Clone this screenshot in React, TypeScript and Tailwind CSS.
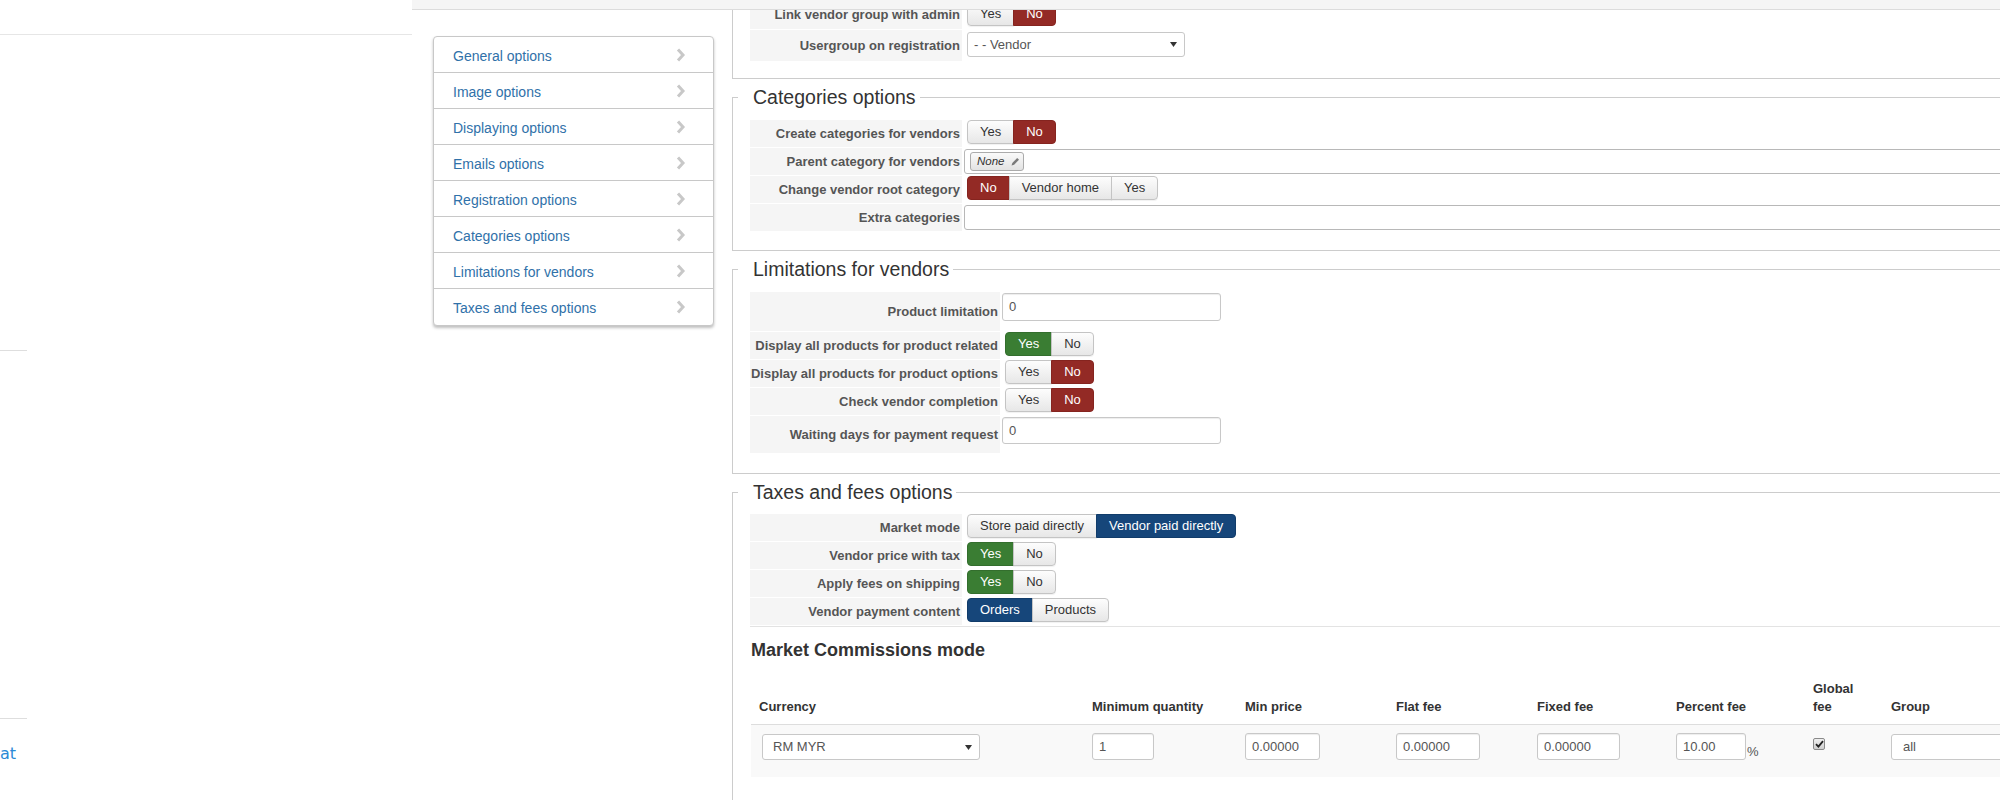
import React from 'react';
import clsx from 'clsx';

// ============================================
// Vendor config page - scrolled view of the options form
// ============================================

type Tone = 'red' | 'green' | 'blue';

const ACTIVE: Record<Tone, string> = {
  red: 'bg-[#932a25] border-[#85241f] text-white',
  green: 'bg-[#3a7d33] border-[#336e2d] text-white',
  blue: 'bg-[#16467a] border-[#113c6a] text-white',
};

const MENU = [
  'General options',
  'Image options',
  'Displaying options',
  'Emails options',
  'Registration options',
  'Categories options',
  'Limitations for vendors',
  'Taxes and fees options',
];

function Chevron() {
  return (
    <svg width="11" height="14" viewBox="0 0 11 14" className="shrink-0">
      <path d="M3 1.5 L8 7 L3 12.5" fill="none" stroke="#c8c8c8" strokeWidth="3" />
    </svg>
  );
}

function Pencil() {
  return (
    <svg width="9" height="9" viewBox="0 0 9 9">
      <path d="M0.5 8.5 L1.3 5.9 L6.2 1 L8 2.8 L3.1 7.7 Z" fill="#7a7a7a" />
    </svg>
  );
}

function Arrow() {
  return (
    <svg width="7" height="5" viewBox="0 0 7 5" className="shrink-0">
      <path d="M0 0 H7 L3.5 5 Z" fill="#333" />
    </svg>
  );
}

function BtnGroup({ items, active, tone, className = '' }: { items: string[]; active: number; tone: Tone; className?: string }) {
  return (
    <div className={`flex ${className}`}>
      {items.map((label, i) => {
        const first = i === 0;
        const last = i === items.length - 1;
        return (
          <span
            key={label}
            className={clsx(
              'h-[24px] px-[12px] border leading-[22px] text-[13px] whitespace-nowrap',
              first && 'rounded-l-[4px]',
              last && 'rounded-r-[4px]',
              !first && '-ml-px',
              i === active
                ? ACTIVE[tone]
                : 'bg-linear-to-b from-[#fdfdfd] to-[#e7e7e7] border-[#c4c4c4] text-[#333] shadow-[0_1px_1px_rgba(0,0,0,0.06)]'
            )}
          >
            {label}
          </span>
        );
      })}
    </div>
  );
}

function Row({ label, w, h, children }: { label: string; w: string; h: string; children?: React.ReactNode }) {
  return (
    <div className={`flex mb-px ${h}`}>
      <div className={`${w} shrink-0 bg-[#f5f5f5] flex items-center justify-end pr-[2px] text-[13px] font-bold text-[#555] whitespace-nowrap`}>
        {label}
      </div>
      <div className="flex-1 min-w-0 pl-px flex items-start">{children}</div>
    </div>
  );
}

function TextBox({ value, className = '' }: { value: string; className?: string }) {
  return (
    <div className={`border border-[#c8c8c8] rounded-[3px] bg-white shadow-[inset_0_1px_1px_rgba(0,0,0,0.075)] flex items-center px-[6px] text-[13px] text-[#555] ${className}`}>
      {value}
    </div>
  );
}

function SelectBox({ text, className = '' }: { text: string; className?: string }) {
  return (
    <div className={`border border-[#c8c8c8] rounded-[3px] bg-white flex items-center justify-between pr-[7px] text-[13px] text-[#555] whitespace-nowrap ${className}`}>
      <span>{text}</span>
      <Arrow />
    </div>
  );
}

function Fieldset({ legend, inner, children }: { legend: string; inner: string; children: React.ReactNode }) {
  return (
    <fieldset className="mt-[6px] border border-[#ccc] min-w-0">
      <legend className="ml-[5px] pl-[15px] pr-[4px] text-[19.5px] leading-[24px] text-[#333]">{legend}</legend>
      <div className={`pl-[17px] ${inner}`}>{children}</div>
    </fieldset>
  );
}

const COLS = 'grid grid-cols-[333px_153px_151px_141px_139px_137px_78px_320px]';
const th = 'px-[8px] pt-[8px] pb-[8px] flex items-end text-[13px] font-bold text-[#333] leading-[18px]';
const td = 'px-[8px] pt-[8px] pb-[17px] flex items-start';

export default function App() {
  return (
    <div className="w-[2000px] h-[800px] overflow-hidden flex bg-white font-['Liberation_Sans',Arial,sans-serif]">
      {/* left panel */}
      <div className="w-[412px] shrink-0 flex flex-col">
        <div className="h-[35px] shrink-0 border-b border-[#e6e6e6]" />
        <div className="mt-[315px] h-px w-[27px] bg-[#dedede]" />
        <div className="mt-[367px] h-px w-[27px] bg-[#dedede]" />
        <div className="mt-[27px] text-[16px] leading-[16px] text-[#2a8ad6] font-['DejaVu_Sans',sans-serif]">at</div>
      </div>

      {/* right panel */}
      <div className="relative flex-1 min-w-0 flex overflow-hidden">
        {/* toolbar strip */}
        <div className="absolute top-0 left-0 right-0 h-[10px] bg-[#f5f5f5] border-b border-[#dcdcdc] z-10" />

        {/* side menu */}
        <div className="ml-[21px] mt-[36px] w-[281px] shrink-0 self-start border border-[#c8c8c8] rounded-[4px] bg-white shadow-[0_2px_3px_rgba(0,0,0,0.25)]">
          {MENU.map((item, i) => (
            <div
              key={item}
              className={clsx(
                'h-[36px] flex items-center justify-between pl-[19px] pr-[27px] text-[14px] text-[#3071a9]',
                i < MENU.length - 1 && 'border-b border-[#c8c8c8]'
              )}
            >
              <span className="pt-[3px]">{item}</span>
              <Chevron />
            </div>
          ))}
        </div>

        {/* form */}
        <div className="ml-[18px] w-[1400px] shrink-0">
          {/* registration (scrolled, top cut) */}
          <div className="border-x border-b border-[#ccc] pl-[17px] pt-px pb-[16px]">
            <Row label="Link vendor group with admin" w="w-[212px]" h="h-[28px]">
              <BtnGroup items={['Yes', 'No']} active={1} tone="red" className="ml-[4px] mt-px" />
            </Row>
            <Row label="Usergroup on registration" w="w-[212px]" h="h-[31px]">
              <SelectBox text="- - Vendor" className="ml-[4px] mt-[2px] h-[25px] w-[218px] pl-[6px]" />
            </Row>
          </div>

          {/* categories */}
          <Fieldset legend="Categories options" inner="pt-[11px] pb-[18px]">
            <Row label="Create categories for vendors" w="w-[212px]" h="h-[27px]">
              <BtnGroup items={['Yes', 'No']} active={1} tone="red" className="ml-[4px]" />
            </Row>
            <Row label="Parent category for vendors" w="w-[212px]" h="h-[27px]">
              <div className="ml-[1px] mt-[1px] h-[25px] w-[1200px] border border-[#b8b8b8] rounded-[3px] bg-white flex items-center pl-[5px]">
                <span className="h-[19px] pl-[6px] pr-[3px] rounded-[3px] border border-[#ababab] bg-linear-to-b from-[#fafafa] to-[#e3e3e3] flex items-center gap-[6px] text-[11.5px] italic text-[#333]">
                  None
                  <Pencil />
                </span>
              </div>
            </Row>
            <Row label="Change vendor root category" w="w-[212px]" h="h-[27px]">
              <BtnGroup items={['No', 'Vendor home', 'Yes']} active={0} tone="red" className="ml-[4px]" />
            </Row>
            <Row label="Extra categories" w="w-[212px]" h="h-[27px]">
              <div className="ml-[1px] mt-[1px] h-[25px] w-[1200px] border border-[#b8b8b8] rounded-[3px] bg-white" />
            </Row>
          </Fieldset>

          {/* limitations */}
          <Fieldset legend="Limitations for vendors" inner="pt-[11px] pb-[19px]">
            <Row label="Product limitation" w="w-[250px]" h="h-[39px]">
              <TextBox value="0" className="ml-[1px] mt-px h-[28px] w-[219px]" />
            </Row>
            <Row label="Display all products for product related" w="w-[250px]" h="h-[27px]">
              <BtnGroup items={['Yes', 'No']} active={0} tone="green" className="ml-[4px]" />
            </Row>
            <Row label="Display all products for product options" w="w-[250px]" h="h-[27px]">
              <BtnGroup items={['Yes', 'No']} active={1} tone="red" className="ml-[4px]" />
            </Row>
            <Row label="Check vendor completion" w="w-[250px]" h="h-[27px]">
              <BtnGroup items={['Yes', 'No']} active={1} tone="red" className="ml-[4px]" />
            </Row>
            <Row label="Waiting days for payment request" w="w-[250px]" h="h-[37px]">
              <TextBox value="0" className="ml-[1px] mt-px h-[27px] w-[219px]" />
            </Row>
          </Fieldset>

          {/* taxes and fees */}
          <Fieldset legend="Taxes and fees options" inner="pt-[10px] pb-[40px]">
            <div className="border-b border-[#e3e3e3]">
              <Row label="Market mode" w="w-[212px]" h="h-[27px]">
                <BtnGroup items={['Store paid directly', 'Vendor paid directly']} active={1} tone="blue" className="ml-[4px]" />
              </Row>
              <Row label="Vendor price with tax" w="w-[212px]" h="h-[27px]">
                <BtnGroup items={['Yes', 'No']} active={0} tone="green" className="ml-[4px]" />
              </Row>
              <Row label="Apply fees on shipping" w="w-[212px]" h="h-[27px]">
                <BtnGroup items={['Yes', 'No']} active={0} tone="green" className="ml-[4px]" />
              </Row>
              <Row label="Vendor payment content" w="w-[212px]" h="h-[27px]">
                <BtnGroup items={['Orders', 'Products']} active={0} tone="blue" className="ml-[4px]" />
              </Row>
            </div>

            <h4 className="ml-px mt-[13px] h-[20px] leading-[20px] text-[18px] font-bold text-[#333]">Market Commissions mode</h4>

            <div className="ml-px mt-[12px]">
              <div className={`${COLS} border-b border-[#ddd]`}>
                <div className={th}>Currency</div>
                <div className={th}>Minimum quantity</div>
                <div className={th}>Min price</div>
                <div className={th}>Flat fee</div>
                <div className={th}>Fixed fee</div>
                <div className={th}>Percent fee</div>
                <div className={th}>
                  Global
                  <br />
                  fee
                </div>
                <div className={th}>Group</div>
              </div>
              <div className={`${COLS} bg-[#f9f9f9]`}>
                <div className={td}>
                  <SelectBox text="RM MYR" className="ml-[3px] mt-px h-[26px] w-[218px] pl-[10px]" />
                </div>
                <div className={td}>
                  <TextBox value="1" className="h-[27px] w-[62px]" />
                </div>
                <div className={td}>
                  <TextBox value="0.00000" className="h-[27px] w-[75px]" />
                </div>
                <div className={td}>
                  <TextBox value="0.00000" className="h-[27px] w-[84px]" />
                </div>
                <div className={td}>
                  <TextBox value="0.00000" className="h-[27px] w-[83px]" />
                </div>
                <div className={td}>
                  <div className="flex items-end">
                    <TextBox value="10.00" className="h-[27px] w-[70px]" />
                    <span className="ml-[1px] text-[13px] leading-[16px] text-[#555]">%</span>
                  </div>
                </div>
                <div className={td}>
                  <span className="mt-[5px] w-[12px] h-[12px] rounded-[2px] border border-[#8a8a8a] bg-linear-to-b from-[#f0f0f0] to-[#cfcfcf] flex items-center justify-center">
                    <svg width="9" height="8" viewBox="0 0 9 8">
                      <path d="M1 4.2 L3.4 6.6 L8 1.2" fill="none" stroke="#222" strokeWidth="1.8" />
                    </svg>
                  </span>
                </div>
                <div className={td}>
                  <SelectBox text="all" className="mt-px h-[26px] w-[218px] pl-[11px]" />
                </div>
              </div>
            </div>
          </Fieldset>
        </div>
      </div>
    </div>
  );
}
